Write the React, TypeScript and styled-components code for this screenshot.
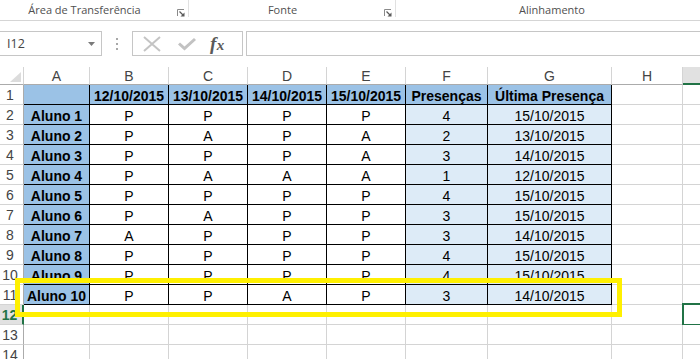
import React from "react";
import styled, { createGlobalStyle, css } from "styled-components";

const GlobalStyle = createGlobalStyle`
  html, body {
    margin: 0;
    padding: 0;
    background: #fff;
  }
  body {
    width: 700px;
    height: 359px;
    overflow: hidden;
    font-family: "Liberation Sans", Arial, sans-serif;
  }
`;

type Row = {
  name: string;
  marks: string[];
  total: string;
  last: string;
};

const dates = ["12/10/2015", "13/10/2015", "14/10/2015", "15/10/2015"];

const rows: Row[] = [
  { name: "Aluno 1", marks: ["P", "P", "P", "P"], total: "4", last: "15/10/2015" },
  { name: "Aluno 2", marks: ["P", "A", "P", "A"], total: "2", last: "13/10/2015" },
  { name: "Aluno 3", marks: ["P", "P", "P", "A"], total: "3", last: "14/10/2015" },
  { name: "Aluno 4", marks: ["P", "A", "A", "A"], total: "1", last: "12/10/2015" },
  { name: "Aluno 5", marks: ["P", "P", "P", "P"], total: "4", last: "15/10/2015" },
  { name: "Aluno 6", marks: ["P", "A", "P", "P"], total: "3", last: "15/10/2015" },
  { name: "Aluno 7", marks: ["A", "P", "P", "P"], total: "3", last: "14/10/2015" },
  { name: "Aluno 8", marks: ["P", "P", "P", "P"], total: "4", last: "15/10/2015" },
  { name: "Aluno 9", marks: ["P", "P", "P", "P"], total: "4", last: "15/10/2015" },
  { name: "Aluno 10", marks: ["P", "P", "A", "P"], total: "3", last: "14/10/2015" },
];

const columns = ["A", "B", "C", "D", "E", "F", "G", "H", "I"];
const totalRows = 14;

const Launcher = () => (
  <LauncherIcon width="8" height="8" viewBox="0 0 8 8">
    <path d="M0.5 7V0.5H7" fill="none" stroke="#8a8a8a" strokeWidth="1" />
    <path d="M2.5 2.5L6 6" stroke="#5a5a5a" strokeWidth="1.2" />
    <path d="M7.5 3.5V7.5H3.5Z" fill="#5a5a5a" />
  </LauncherIcon>
);

const App: React.FC = () => {
  return (
    <Page>
      <GlobalStyle />
      <Ribbon>
        <RibbonGroup $width={189}>
          <GroupLabel>Área de Transferência</GroupLabel>
          <Launcher />
        </RibbonGroup>
        <RibbonGroup $width={207}>
          <GroupLabel>Fonte</GroupLabel>
          <Launcher />
        </RibbonGroup>
        <RibbonGroup $width={320} $last>
          <GroupLabel>Alinhamento</GroupLabel>
        </RibbonGroup>
      </Ribbon>

      <FormulaBar>
        <NameBox>
          <span>I12</span>
          <svg width="8" height="4" viewBox="0 0 8 4">
            <path d="M0 0H7L3.5 4Z" fill="#7a7a7a" />
          </svg>
        </NameBox>
        <Grip>
          <i />
          <i />
          <i />
        </Grip>
        <FormulaButtons>
          <svg width="20" height="16" viewBox="0 0 20 16">
            <path d="M2 1L18 15M18 1L2 15" stroke="#c4c4c4" strokeWidth="2" />
          </svg>
          <svg width="20" height="14" viewBox="0 0 20 14">
            <path
              d="M1 7.5L3 5.5L7.5 9.5L17 1L19 3L7.5 13.5Z"
              fill="#c2c2c2"
            />
          </svg>
          <Fx>
            f<span>x</span>
          </Fx>
        </FormulaButtons>
        <FormulaInput />
      </FormulaBar>

      <SheetArea>
        <Sheet>
          <Corner>
            <svg width="11" height="10" viewBox="0 0 11 10">
              <path d="M11 0V10H0Z" fill="#dcdcdc" />
            </svg>
          </Corner>
          {columns.map((c) => (
            <ColHeader key={c} $selected={c === "I"}>
              {c}
            </ColHeader>
          ))}

          {Array.from({ length: totalRows }, (_, i) => {
            const r = i + 1;
            const cells: React.ReactNode[] = [];
            if (r === 1) {
              cells.push(<Cell key="a" $fill="head" $edge />);
              dates.forEach((d) =>
                cells.push(
                  <Cell key={d} $fill="head" $edge $bold>
                    {d}
                  </Cell>
                )
              );
              cells.push(
                <Cell key="f" $fill="head" $edge $bold>
                  Presenças
                </Cell>
              );
              cells.push(
                <Cell key="g" $fill="head" $edge $bold>
                  Última Presença
                </Cell>
              );
            } else if (r <= 11) {
              const row = rows[r - 2];
              cells.push(
                <Cell key="a" $fill="head" $edge $bold>
                  {row.name}
                </Cell>
              );
              row.marks.forEach((m, j) =>
                cells.push(
                  <Cell key={j} $edge>
                    {m}
                  </Cell>
                )
              );
              cells.push(
                <Cell key="f" $fill="light" $edge>
                  {row.total}
                </Cell>
              );
              cells.push(
                <Cell key="g" $fill="light" $edge>
                  {row.last}
                </Cell>
              );
            } else {
              for (let j = 0; j < 7; j++) cells.push(<Cell key={j} />);
            }
            cells.push(<Cell key="h" />);
            cells.push(<Cell key="i">{r === 12 && <Selection />}</Cell>);
            return (
              <React.Fragment key={r}>
                <RowHeader $selected={r === 12}>{r}</RowHeader>
                {cells}
              </React.Fragment>
            );
          })}
        </Sheet>
        <Highlight />
      </SheetArea>
    </Page>
  );
};

export default App;

const Page = styled.div`
  position: relative;
  width: 700px;
  height: 359px;
  overflow: hidden;
  background: #fff;
`;

const Ribbon = styled.div`
  display: flex;
  height: 20px;
  border-bottom: 1px solid #d5d5d5;
  overflow: hidden;
`;

const RibbonGroup = styled.div<{ $width: number; $last?: boolean }>`
  flex: 0 0 ${(p) => p.$width}px;
  display: flex;
  align-items: flex-start;
  height: 17px;
  box-sizing: border-box;
  border-right: ${(p) => (p.$last ? "none" : "1px solid #e1e1e1")};
`;

const GroupLabel = styled.div`
  flex: 1;
  padding-right: 8px;
  text-align: center;
  font-family: "Open Sans", "Noto Sans", sans-serif;
  font-size: 11px;
  line-height: 20px;
  color: #505050;
  white-space: nowrap;
`;

const LauncherIcon = styled.svg`
  margin: 9px 3px 0 0;
  flex: 0 0 auto;
`;

const FormulaBar = styled.div`
  display: flex;
  align-items: stretch;
  height: 25px;
  margin-top: 10px;
`;

const NameBox = styled.div`
  width: 102px;
  box-sizing: border-box;
  border: 1px solid #c6c6c6;
  border-left: none;
  display: flex;
  align-items: center;
  justify-content: space-between;
  padding: 0 5px 0 7px;
  font-family: "Open Sans", "Noto Sans", sans-serif;
  font-size: 12.5px;
  color: #444;
`;

const Grip = styled.div`
  width: 30px;
  display: flex;
  flex-direction: column;
  align-items: center;
  justify-content: center;
  gap: 3px;

  i {
    display: block;
    width: 2px;
    height: 2px;
    background: #a8a8a8;
  }
`;

const FormulaButtons = styled.div`
  width: 111px;
  box-sizing: border-box;
  border: 1px solid #c6c6c6;
  display: flex;
  align-items: center;
  padding: 0 0 0 9px;
  gap: 15px;
`;

const Fx = styled.span`
  font-family: "Liberation Serif", "DejaVu Serif", serif;
  font-style: italic;
  font-weight: bold;
  font-size: 19px;
  color: #5a5a5a;
  letter-spacing: 0.5px;
  margin-left: -2px;

  span {
    font-size: 15px;
  }
`;

const FormulaInput = styled.div`
  flex: 1;
  margin-left: 3px;
  margin-right: -2px;
  border: 1px solid #c6c6c6;
`;

const SheetArea = styled.div`
  position: relative;
  margin-top: 11px;
`;

const Sheet = styled.div`
  display: grid;
  grid-template-columns: 24px 66px 79px 79px 79px 79px 82px 124px 71px 71px;
  grid-template-rows: 18px;
  grid-auto-rows: 20px;
  width: 700px;
  overflow: hidden;
`;

const headerText = css`
  font-family: "Liberation Sans", Arial, sans-serif;
  font-size: 14px;
  color: #444;
  box-sizing: border-box;
  display: flex;
  justify-content: center;
`;

const Corner = styled.div`
  box-sizing: border-box;
  border-right: 1px solid #d4d4d4;
  border-bottom: 1px solid #ababab;
  display: flex;
  align-items: flex-end;
  justify-content: flex-end;
  padding: 0 2px 2px 0;
`;

const ColHeader = styled.div<{ $selected?: boolean }>`
  ${headerText};
  align-items: center;
  padding-top: 1px;
  border-right: 1px solid #d4d4d4;
  border-bottom: ${(p) => (p.$selected ? "2px solid #217346" : "1px solid #ababab")};
  background: ${(p) => (p.$selected ? "#e1e1e1" : "#fff")};
`;

const RowHeader = styled.div<{ $selected?: boolean }>`
  ${headerText};
  align-items: center;
  padding: 1px 3px 0 0;
  border-bottom: 1px solid #d4d4d4;
  border-right: ${(p) => (p.$selected ? "2px solid #217346" : "1px solid #ababab")};
  background: ${(p) => (p.$selected ? "#e1e1e1" : "#fff")};
  color: ${(p) => (p.$selected ? "#217346" : "#444")};
  font-weight: ${(p) => (p.$selected ? "bold" : "normal")};
`;

const fills = {
  head: "#9bc2e6",
  light: "#ddebf7",
  none: "#fff",
};

const Cell = styled.div<{
  $fill?: keyof typeof fills;
  $edge?: boolean;
  $bold?: boolean;
}>`
  position: relative;
  box-sizing: border-box;
  display: flex;
  align-items: center;
  justify-content: center;
  padding-top: 3px;
  line-height: 16px;
  font-family: "Liberation Sans", Arial, sans-serif;
  font-size: 14px;
  font-weight: ${(p) => (p.$bold ? "bold" : "normal")};
  color: #000;
  white-space: nowrap;
  background: ${(p) => fills[p.$fill ?? "none"]};
  border-right: 1px solid ${(p) => (p.$edge ? "#000" : "#d4d4d4")};
  border-bottom: 1px solid ${(p) => (p.$edge ? "#000" : "#d4d4d4")};
`;

const Selection = styled.div`
  position: absolute;
  top: -2px;
  left: -1px;
  right: -1px;
  bottom: -2px;
  border: 2px solid #217346;
`;

const Highlight = styled.div`
  position: absolute;
  left: 15px;
  top: 211px;
  width: 607px;
  height: 39px;
  box-sizing: border-box;
  border: 5px solid #fff000;
  pointer-events: none;
`;
